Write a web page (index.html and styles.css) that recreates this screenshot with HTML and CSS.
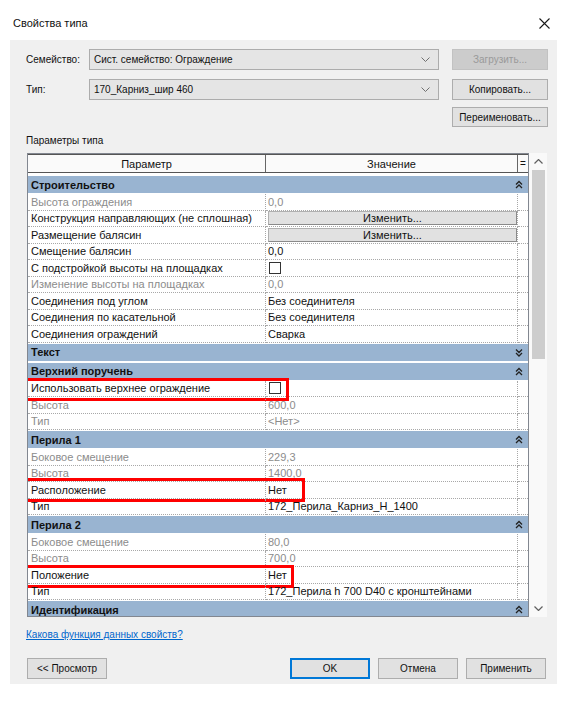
FILE: index.html
```html
<!DOCTYPE html>
<html lang="ru">
<head>
<meta charset="utf-8">
<title>Свойства типа</title>
<link rel="stylesheet" href="styles.css">
</head>
<body>
<div class="titlebar">
  <span class="title">Свойства типа</span>
  <svg class="close" width="11" height="11" viewBox="0 0 11 11"><path d="M0.5 0.5 L10.5 10.5 M10.5 0.5 L0.5 10.5" stroke="#1a1a1a" stroke-width="1.1" fill="none"/></svg>
</div>
<div class="panel">
  <div class="field-row r1">
    <span class="flabel">Семейство:</span>
    <div class="combo"><span>Сист. семейство: Ограждение</span><svg width="9" height="5" viewBox="0 0 9 5"><path d="M0.5 0.5 L4.5 4.5 L8.5 0.5" stroke="#707070" fill="none"/></svg></div>
    <button class="btn disabled">Загрузить...</button>
  </div>
  <div class="field-row r2">
    <span class="flabel">Тип:</span>
    <div class="combo"><span>170_Карниз_шир 460</span><svg width="9" height="5" viewBox="0 0 9 5"><path d="M0.5 0.5 L4.5 4.5 L8.5 0.5" stroke="#707070" fill="none"/></svg></div>
    <button class="btn">Копировать...</button>
  </div>
  <div class="field-row r3">
    <button class="btn">Переименовать...</button>
  </div>
  <div class="section-label">Параметры типа</div>

  <div class="table-wrap">
    <div class="grid">
      <div class="ghead">
        <div class="hc hp">Параметр</div>
        <div class="hc hv">Значение</div>
        <div class="hc he">=</div>
      </div>
      <div class="gbody">
        <div class="group"><span>Строительство</span><svg class="chev" width="8" height="9" viewBox="0 0 8 9"><path d="M1 4.5 L4 1.5 L7 4.5 M1 8 L4 5 L7 8" stroke="#222" stroke-width="1.3" fill="none"/></svg></div>
        <div class="row"><div class="c cp dim">Высота ограждения</div><div class="c cv dim">0,0</div><div class="c ce"></div></div>
        <div class="row"><div class="c cp">Конструкция направляющих (не сплошная)</div><div class="c cv"><span class="cellbtn">Изменить...</span></div><div class="c ce"></div></div>
        <div class="row"><div class="c cp">Размещение балясин</div><div class="c cv"><span class="cellbtn">Изменить...</span></div><div class="c ce"></div></div>
        <div class="row"><div class="c cp">Смещение балясин</div><div class="c cv">0,0</div><div class="c ce"></div></div>
        <div class="row"><div class="c cp">С подстройкой высоты на площадках</div><div class="c cv"><span class="chk"></span></div><div class="c ce"></div></div>
        <div class="row"><div class="c cp dim">Изменение высоты на площадках</div><div class="c cv dim">0,0</div><div class="c ce"></div></div>
        <div class="row"><div class="c cp">Соединения под углом</div><div class="c cv">Без соединителя</div><div class="c ce"></div></div>
        <div class="row"><div class="c cp">Соединения по касательной</div><div class="c cv">Без соединителя</div><div class="c ce"></div></div>
        <div class="row"><div class="c cp">Соединения ограждений</div><div class="c cv">Сварка</div><div class="c ce"></div></div>
        <div class="group"><span>Текст</span><svg class="chev" width="8" height="9" viewBox="0 0 8 9"><path d="M1 1.5 L4 4.5 L7 1.5 M1 5 L4 8 L7 5" stroke="#222" stroke-width="1.3" fill="none"/></svg></div>
        <div class="group"><span>Верхний поручень</span><svg class="chev" width="8" height="9" viewBox="0 0 8 9"><path d="M1 4.5 L4 1.5 L7 4.5 M1 8 L4 5 L7 8" stroke="#222" stroke-width="1.3" fill="none"/></svg></div>
        <div class="row"><div class="c cp">Использовать верхнее ограждение</div><div class="c cv"><span class="chk"></span></div><div class="c ce"></div><div class="hl hl1"></div></div>
        <div class="row"><div class="c cp dim">Высота</div><div class="c cv dim">600,0</div><div class="c ce"></div></div>
        <div class="row"><div class="c cp dim">Тип</div><div class="c cv dim">&lt;Нет&gt;</div><div class="c ce"></div></div>
        <div class="group"><span>Перила 1</span><svg class="chev" width="8" height="9" viewBox="0 0 8 9"><path d="M1 4.5 L4 1.5 L7 4.5 M1 8 L4 5 L7 8" stroke="#222" stroke-width="1.3" fill="none"/></svg></div>
        <div class="row"><div class="c cp dim">Боковое смещение</div><div class="c cv dim">229,3</div><div class="c ce"></div></div>
        <div class="row"><div class="c cp dim">Высота</div><div class="c cv dim">1400,0</div><div class="c ce"></div></div>
        <div class="row"><div class="c cp">Расположение</div><div class="c cv">Нет</div><div class="c ce"></div><div class="hl hl2"></div></div>
        <div class="row"><div class="c cp">Тип</div><div class="c cv">172_Перила_Карниз_H_1400</div><div class="c ce"></div></div>
        <div class="group"><span>Перила 2</span><svg class="chev" width="8" height="9" viewBox="0 0 8 9"><path d="M1 4.5 L4 1.5 L7 4.5 M1 8 L4 5 L7 8" stroke="#222" stroke-width="1.3" fill="none"/></svg></div>
        <div class="row"><div class="c cp dim">Боковое смещение</div><div class="c cv dim">80,0</div><div class="c ce"></div></div>
        <div class="row"><div class="c cp dim">Высота</div><div class="c cv dim">700,0</div><div class="c ce"></div></div>
        <div class="row"><div class="c cp">Положение</div><div class="c cv">Нет</div><div class="c ce"></div><div class="hl hl3"></div></div>
        <div class="row"><div class="c cp">Тип</div><div class="c cv">172_Перила h 700 D40 с кронштейнами</div><div class="c ce"></div></div>
        <div class="group"><span>Идентификация</span><svg class="chev" width="8" height="9" viewBox="0 0 8 9"><path d="M1 4.5 L4 1.5 L7 4.5 M1 8 L4 5 L7 8" stroke="#222" stroke-width="1.3" fill="none"/></svg></div>
      </div>
    </div>
    <div class="scrollbar">
      <div class="arrow"><svg width="9" height="5" viewBox="0 0 9 5"><path d="M0.5 4.5 L4.5 0.5 L8.5 4.5" stroke="#606060" stroke-width="1.2" fill="none"/></svg></div>
      <div class="track"><div class="thumb"></div></div>
      <div class="arrow"><svg width="9" height="5" viewBox="0 0 9 5"><path d="M0.5 0.5 L4.5 4.5 L8.5 0.5" stroke="#606060" stroke-width="1.2" fill="none"/></svg></div>
    </div>
  </div>

  <a class="help" href="#">Какова функция данных свойств?</a>

  <div class="footer">
    <button class="btn fb">&lt;&lt; Просмотр</button>
    <div class="spacer"></div>
    <button class="btn fb ok">OK</button>
    <button class="btn fb">Отмена</button>
    <button class="btn fb">Применить</button>
  </div>
</div>
</body>
</html>
```

FILE: styles.css
```css
* { box-sizing: border-box; }

body {
  margin: 0;
  width: 569px;
  height: 701px;
  overflow: hidden;
  background: #ffffff;
  font-family: "Liberation Sans", Arial, sans-serif;
  font-size: 10px;
  color: #000;
}

.titlebar {
  height: 40px;
  display: flex;
  align-items: center;
  justify-content: space-between;
  padding: 6px 19px 0 13px;
}

.title {
  font-size: 11px;
  color: #111;
}

.close { display: block; }

.panel {
  margin-left: 10px;
  width: 547px;
  height: 644px;
  background: #f0f0f0;
  padding: 9px 9px 0 16px;
  display: flex;
  flex-direction: column;
}

.field-row {
  display: flex;
  align-items: center;
  height: 21px;
}

.r2 { margin-top: 9px; }
.r3 { margin-top: 7px; justify-content: flex-end; height: 20px; }

.flabel {
  width: 63px;
  color: #111;
}

.combo {
  width: 350px;
  height: 21px;
  background: #e5e5e5;
  border: 1px solid #acacac;
  display: flex;
  align-items: center;
  justify-content: space-between;
  padding: 0 8px 0 4px;
  color: #111;
}

.combo svg { display: block; }

.btn {
  font-family: "Liberation Sans", Arial, sans-serif;
  font-size: 10px;
  color: #111;
  background: #e1e1e1;
  border: 1px solid #adadad;
  height: 21px;
  width: 96px;
  margin-left: auto;
  padding: 0;
}

.r3 .btn { height: 20px; }

.btn.disabled {
  background: #cccccc;
  border-color: #c2c2c2;
  color: #9a9a9a;
}

.section-label {
  margin-top: 7px;
  height: 14px;
  line-height: 14px;
  color: #111;
}

.table-wrap {
  margin-top: 5px;
  margin-left: 1px;
  width: 520px;
  height: 464px;
  display: flex;
}

.grid {
  width: 502px;
  height: 100%;
  border: 1px solid #828790;
  background: #ffffff;
  display: flex;
  flex-direction: column;
  overflow: hidden;
}

.ghead {
  display: flex;
  height: 19px;
  flex-shrink: 0;
  border-top: 1px solid #555;
  border-bottom: 1px solid #555;
  background: #fafafa;
  font-size: 11px;
}

.hc {
  display: flex;
  align-items: center;
  justify-content: center;
  border-right: 1px solid #666;
  color: #111;
}

.hp { width: 238px; }
.hv { width: 252px; }
.he { width: 10px; border-right: none; font-size: 10px; }

.gbody {
  flex: 1;
  overflow: hidden;
  padding-top: 2px;
  font-size: 11px;
}

.group {
  height: 19px;
  background: #99b4d1;
  border-top: 1px solid #fff;
  border-bottom: 1px solid #fff;
  display: flex;
  align-items: center;
  justify-content: space-between;
  padding: 0 5px 0 3px;
  font-weight: bold;
  color: #111;
}

.chev { display: block; }

.row {
  position: relative;
  display: flex;
  height: 16.5px;
}

.c {
  border-bottom: 1px dotted #a8a8a8;
  display: flex;
  align-items: center;
  white-space: nowrap;
  overflow: hidden;
  color: #111;
}

.cp {
  width: 238px;
  border-right: 1px dotted #a8a8a8;
  padding-left: 3px;
}

.cv {
  width: 252px;
  border-right: 1px dotted #a8a8a8;
  padding-left: 2px;
}

.ce { width: 10px; }

.dim { color: #8c8c8c; }

.cellbtn {
  display: flex;
  align-items: center;
  justify-content: center;
  width: 249px;
  height: 14px;
  background: #e1e1e1;
  border: 1px solid #b0b0b0;
  border-right-color: #8a8a8a;
  border-bottom-color: #8a8a8a;
  color: #111;
}

.chk {
  display: block;
  width: 12px;
  height: 12px;
  border: 1px solid #333;
  background: #fff;
  margin-left: 1px;
}

.hl {
  position: absolute;
  left: -3px;
  top: -3px;
  height: 23px;
  border: 3px solid #ff0000;
  pointer-events: none;
}

.hl1 { width: 264px; }
.hl2 { width: 280px; height: 24px; top: -4px; }
.hl3 { width: 269px; height: 23px; top: -2px; }

.scrollbar {
  width: 18px;
  height: 100%;
  background: #f9f9f9;
  display: flex;
  flex-direction: column;
}

.arrow {
  height: 17px;
  display: flex;
  align-items: center;
  justify-content: center;
}

.arrow svg { display: block; }

.track { flex: 1; }

.thumb {
  margin: 0 2px 0 3px;
  height: 189px;
  background: #cdcdcd;
}

.help {
  margin-top: 11px;
  height: 14px;
  line-height: 14px;
  color: #0066cc;
  text-decoration: underline;
  align-self: flex-start;
}

.footer {
  margin-top: 16px;
  margin-left: 1px;
  margin-right: 2px;
  display: flex;
  gap: 8px;
}

.fb {
  width: 80px;
  height: 21px;
  margin-left: 0;
}

.ok { border: 1px solid #0078d7; box-shadow: inset 0 0 0 1px #0078d7; }

.spacer { flex: 1; }
```
